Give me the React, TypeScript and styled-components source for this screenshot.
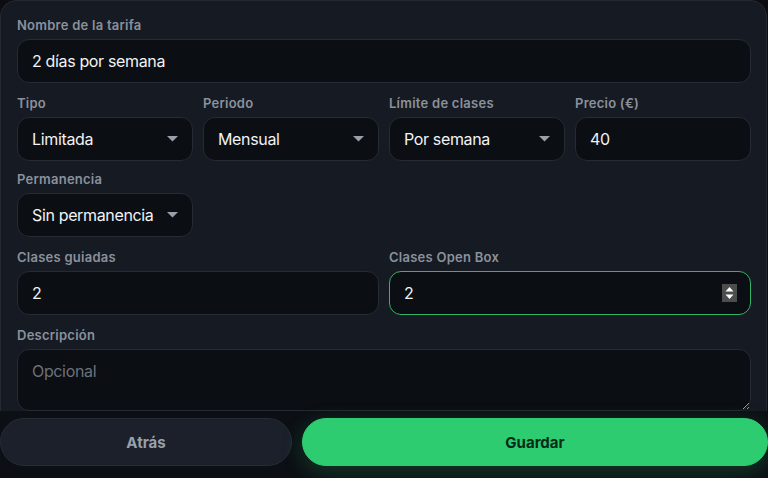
import React from "react";
import styled, { createGlobalStyle } from "styled-components";

const Global = createGlobalStyle`
  html, body { margin: 0; padding: 0; background: #0b0d11; }
  body { font-family: Inter, "Noto Sans", "Liberation Sans", sans-serif; color: #f1f3f5; color-scheme: dark; overflow: hidden; }
  * { box-sizing: border-box; }
`;

const Page = styled.div`
  width: 768px;
  height: 478px;
  position: relative;
  overflow: hidden;
`;

const Card = styled.div`
  margin: 0 1px 0 0;
  background: #161a22;
  border: 1px solid #232833;
  border-radius: 16px;
  padding: 16px 15px 40px 16px;
  display: flex;
  flex-direction: column;
  gap: 12px;
`;

const Row = styled.div<{ $cols: number }>`
  display: grid;
  grid-template-columns: repeat(${(p) => p.$cols}, 1fr);
  column-gap: 10px;
`;

const Field = styled.div`
  display: flex;
  flex-direction: column;
  min-width: 0;
`;

const Label = styled.label`
  font-size: 13px;
  font-weight: 600;
  line-height: 16px;
  letter-spacing: 0.25px;
  color: #8b919c;
  margin-bottom: 6px;
  white-space: nowrap;
`;

const Input = styled.input<{ $focus?: boolean }>`
  height: 44px;
  width: 100%;
  background: #0b0e13;
  border: 1px solid ${(p) => (p.$focus ? "#34b46a" : "#252a34")};
  border-radius: 12px;
  padding: 0 14px;
  font-family: inherit;
  font-size: 16px;
  letter-spacing: -0.35px;
  color: #f1f3f5;
  outline: none;
`;

const SelectWrap = styled.div`
  position: relative;
`;

const Select = styled.div`
  height: 44px;
  background: #0b0e13;
  border: 1px solid #252a34;
  border-radius: 12px;
  padding: 0 30px 0 14px;
  display: flex;
  align-items: center;
  font-size: 16px;
  letter-spacing: -0.35px;
  color: #f1f3f5;
  white-space: nowrap;
  overflow: hidden;
`;

const Arrow = styled.svg`
  position: absolute;
  right: 15px;
  top: 19px;
  width: 11px;
  height: 6px;
`;

const Spinner = styled.svg`
  position: absolute;
  right: 14px;
  top: 13px;
  width: 15px;
  height: 18px;
`;

const TextArea = styled.textarea`
  height: 62px;
  width: 100%;
  background: #0b0e13;
  border: 1px solid #252a34;
  border-radius: 12px;
  padding: 11px 14px;
  font-family: inherit;
  font-size: 16px;
  letter-spacing: -0.35px;
  color: #f1f3f5;
  resize: vertical;
  outline: none;
  &::placeholder { color: #6b717c; }
`;

const Footer = styled.div`
  position: absolute;
  left: 0;
  right: 0;
  bottom: 0;
  height: 67px;
  padding: 7px 0 12px;
  background: #0c0f14;
  display: flex;
  gap: 10px;
`;

const Button = styled.button<{ $primary?: boolean }>`
  flex: ${(p) => (p.$primary ? "1 1 auto" : "0 0 292px")};
  min-width: 0;
  height: 48px;
  border-radius: 24px;
  border: 1px solid ${(p) => (p.$primary ? "#2ecc71" : "#262b36")};
  background: ${(p) => (p.$primary ? "#2ecc71" : "#1b202b")};
  color: ${(p) => (p.$primary ? "#062b16" : "#9aa0ab")};
  font-family: inherit;
  font-size: 15px;
  font-weight: 700;
  box-shadow: ${(p) => (p.$primary ? "0 6px 22px rgba(46,204,113,0.22)" : "none")};
`;

const SelectField = ({ label, value }: { label: string; value: string }) => (
  <Field>
    <Label>{label}</Label>
    <SelectWrap>
      <Select>{value}</Select>
      <Arrow viewBox="0 0 11 6">
        <path d="M0 0 H11 L5.5 5.5 Z" fill="#9aa0aa" />
      </Arrow>
    </SelectWrap>
  </Field>
);

export default function App() {
  return (
    <Page>
      <Global />
      <Card>
        <Field>
          <Label>Nombre de la tarifa</Label>
          <Input defaultValue="2 días por semana" />
        </Field>
        <Row $cols={4}>
          <SelectField label="Tipo" value="Limitada" />
          <SelectField label="Periodo" value="Mensual" />
          <SelectField label="Límite de clases" value="Por semana" />
          <Field>
            <Label>Precio (€)</Label>
            <Input defaultValue="40" />
          </Field>
        </Row>
        <Row $cols={4} style={{ marginTop: -2 }}>
          <SelectField label="Permanencia" value="Sin permanencia" />
        </Row>
        <Row $cols={2}>
          <Field>
            <Label>Clases guiadas</Label>
            <Input defaultValue="2" />
          </Field>
          <Field>
            <Label>Clases Open Box</Label>
            <SelectWrap>
              <Input $focus defaultValue="2" />
              <Spinner viewBox="0 0 15 18">
                <rect width="15" height="18" fill="#4d4d4d" />
                <path d="M3.5 7.5 L7.5 3 L11.5 7.5 Z" fill="#ffffff" />
                <path d="M3.5 10.5 L7.5 15 L11.5 10.5 Z" fill="#ffffff" />
              </Spinner>
            </SelectWrap>
          </Field>
        </Row>
        <Field>
          <Label>Descripción</Label>
          <TextArea placeholder="Opcional" />
        </Field>
      </Card>
      <Footer>
        <Button>Atrás</Button>
        <Button $primary>Guardar</Button>
      </Footer>
    </Page>
  );
}
